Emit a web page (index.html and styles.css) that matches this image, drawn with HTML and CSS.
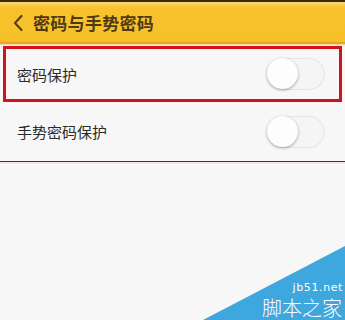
FILE: index.html
```html
<!DOCTYPE html>
<html>
<head>
<meta charset="utf-8">
<link rel="stylesheet" href="styles.css">
</head>
<body>
<div class="screen">
  <div class="topline"></div>
  <header class="header">
    <svg class="back" width="12" height="18" viewBox="0 0 12 18"><path d="M9.5 2 L3 9 L9.5 16" fill="none" stroke="#5a3f12" stroke-width="2.2" stroke-linecap="round" stroke-linejoin="round"/></svg>
    <span class="title">密码与手势密码</span>
  </header>
  <div class="list">
    <div class="row row-boxed">
      <span class="label">密码保护</span>
      <span class="toggle"><span class="knob"></span></span>
    </div>
    <div class="row">
      <span class="label">手势密码保护</span>
      <span class="toggle"><span class="knob"></span></span>
    </div>
  </div>
  <div class="divider"></div>
  <div class="watermark">
    <svg class="wm-bg" width="142" height="74" viewBox="0 0 142 74"><polygon points="142,0 142,74 0,74" fill="#3ea7dd"/></svg>
    <span class="wm-url">jb51.net</span>
    <span class="wm-name">脚本之家</span>
  </div>
</div>
</body>
</html>
```
FILE: styles.css
```css
html, body {
  margin: 0;
  padding: 0;
}
body {
  background: #f7f7f7;
  font-family: "Noto Sans CJK SC", "Noto Sans", sans-serif;
}
.screen {
  width: 345px;
  height: 320px;
  position: relative;
  overflow: hidden;
  background: #f7f7f7;
}
.topline {
  height: 2px;
  background: #3b2a0e;
}
.header {
  height: 40px;
  background: linear-gradient(#fbd66e 0px, #f9cc4a 3px, #f7c22c 6px, #f7c12a 100%);
  border-bottom: 2px solid #eaa323;
  box-shadow: 0 1px 1px #f6d9a8;
  display: flex;
  align-items: center;
  padding-left: 12px;
  box-sizing: content-box;
}
.back {
  display: block;
  margin-right: 9px;
  margin-top: 1px;
}
.title {
  font-size: 17px;
  font-weight: bold;
  color: #4f3a14;
  letter-spacing: 0.3px;
}
.list {
  padding: 2px 3px 0 3px;
}
.row {
  height: 55px;
  display: flex;
  align-items: center;
  justify-content: space-between;
  padding: 0 17px 0 14px;
  box-sizing: border-box;
}
.row-boxed {
  border: 3px solid #d0141d;
  padding: 0 14px 0 11px;
  height: 56px;
  margin-bottom: 2px;
}
.label {
  font-size: 15px;
  color: #2a2a2a;
}
.toggle {
  width: 58px;
  height: 32px;
  border-radius: 16px;
  border: 1px solid #e4e4e4;
  background: #f5f5f5;
  position: relative;
  box-sizing: border-box;
  display: block;
}
.knob {
  position: absolute;
  left: -1px;
  top: -1px;
  width: 31px;
  height: 31px;
  border-radius: 50%;
  background: #fdfdfd;
  box-shadow: 0 1px 3px rgba(0,0,0,0.35);
}
.divider {
  margin-top: 2px;
  height: 1px;
  background: #5a2838;
  border-bottom: 2px solid #f6e4ea;
}
.watermark {
  position: absolute;
  right: 0;
  bottom: 0;
  width: 142px;
  height: 74px;
}
.wm-bg {
  position: absolute;
  left: 0;
  top: 0;
  display: block;
}
.wm-url {
  position: absolute;
  right: 2px;
  top: 36px;
  font-family: "DejaVu Sans", sans-serif;
  font-size: 11px;
  line-height: 12px;
  letter-spacing: 0.6px;
  color: #ffffff;
}
.wm-name {
  position: absolute;
  right: 3px;
  top: 51px;
  font-size: 20px;
  line-height: 22px;
  font-weight: 300;
  color: #ffffff;
  white-space: nowrap;
}
```
